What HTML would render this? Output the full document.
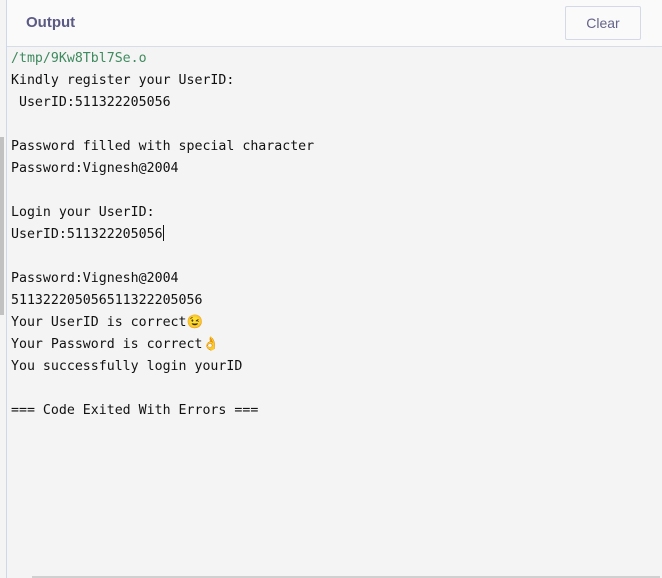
<!DOCTYPE html>
<html><head><style>
body{margin:0;width:662px;height:578px;background:#f4f4f4;position:relative;overflow:hidden;font-family:"Liberation Sans",sans-serif}
.hdr{position:absolute;left:6px;top:0;width:656px;height:46px;background:#fafafa;border-bottom:1px solid #d6dce9}
.ttl{position:absolute;left:20px;top:14px;font-size:15px;font-weight:600;color:#5b5a84}
.btn{position:absolute;left:559px;top:6px;width:74px;height:32px;border:1px solid #d3d9e8;border-radius:2px;background:#fafafa;color:#66648a;font-size:14px;text-align:center;line-height:32px}
.vline{position:absolute;left:6px;top:0;width:1px;height:578px;background:#cfd8e8}
.sb{position:absolute;left:0;top:137px;width:4px;height:178px;background:#c1c1c1}
.hs{position:absolute;left:32px;top:576px;width:628px;height:2px;background:#d0d0d0}
pre{position:absolute;left:11px;top:48px;margin:0;font-family:"DejaVu Sans Mono","Liberation Mono",monospace;font-size:13.25px;line-height:22px;color:#111}
.g{color:#3f8a5f}
.cur{display:inline-block;width:1px;height:16px;background:#111;vertical-align:-3px}
</style></head><body>
<div class="hdr"><div class="ttl">Output</div><div class="btn">Clear</div></div>
<div class="vline"></div>
<div class="sb"></div>
<div class="hs"></div>
<pre><span class="g">/tmp/9Kw8Tbl7Se.o</span>
Kindly register your UserID:
 UserID:511322205056

Password filled with special character
Password:Vignesh@2004

Login your UserID:
UserID:511322205056<span class="cur"></span>

Password:Vignesh@2004
511322205056511322205056
Your UserID is correct😉
Your Password is correct👌
You successfully login yourID

=== Code Exited With Errors ===</pre>
</body></html>
